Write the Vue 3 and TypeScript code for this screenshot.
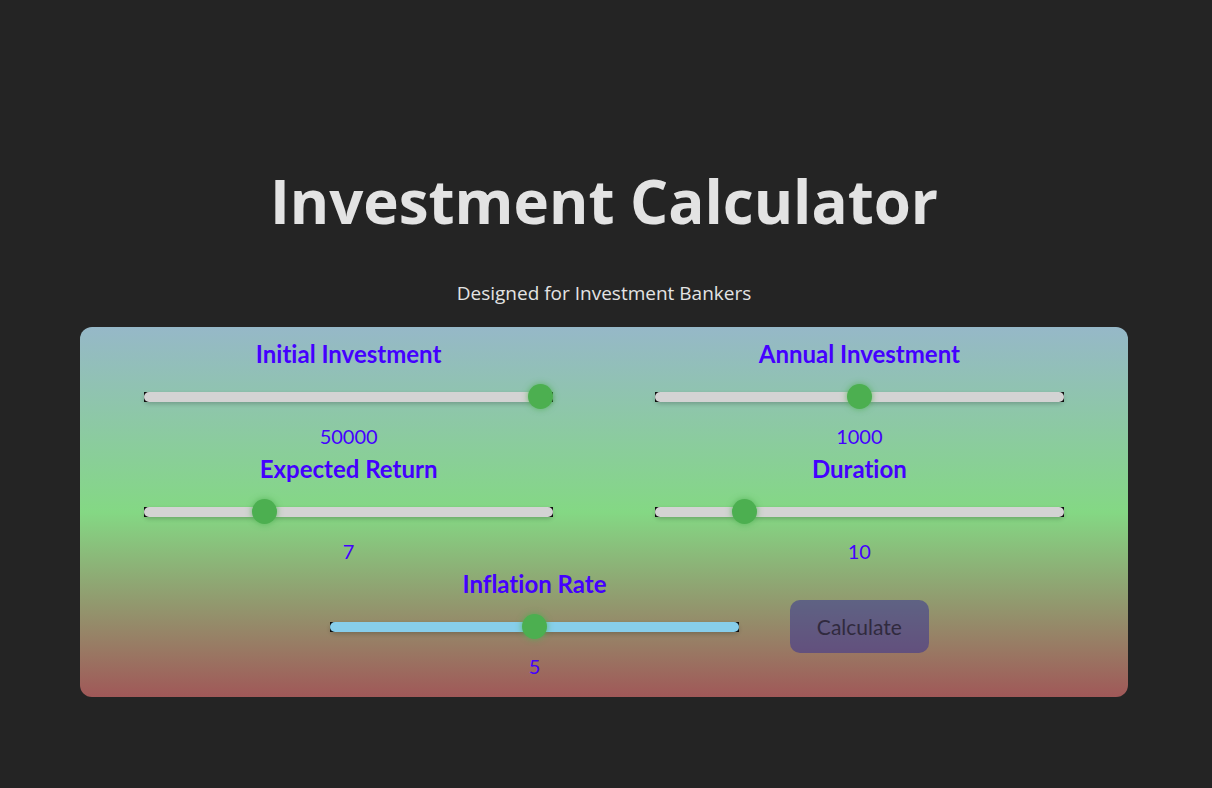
<script setup lang="ts">
import { reactive } from 'vue'

interface Field {
  id: string
  label: string
  min: number
  max: number
  step: number
  value: number
  tone: 'gray' | 'sky'
}

const fields = reactive<Field[]>([
  { id: 'initial', label: 'Initial Investment', min: 0, max: 50000, step: 100, value: 50000, tone: 'gray' },
  { id: 'annual', label: 'Annual Investment', min: 0, max: 2000, step: 50, value: 1000, tone: 'gray' },
  { id: 'return', label: 'Expected Return', min: 0, max: 25, step: 1, value: 7, tone: 'gray' },
  { id: 'duration', label: 'Duration', min: 0, max: 50, step: 1, value: 10, tone: 'gray' },
  { id: 'inflation', label: 'Inflation Rate', min: 0, max: 10, step: 1, value: 5, tone: 'sky' },
])
</script>

<template>
  <main class="page">
    <header class="header">
      <h1 class="title">Investment Calculator</h1>
      <p class="subtitle">Designed for Investment Bankers</p>
    </header>
    <form class="panel" @submit.prevent>
      <div v-for="field in fields" :key="field.id" class="field">
        <label class="label" :for="field.id">{{ field.label }}</label>
        <input
          :id="field.id"
          v-model.number="field.value"
          class="slider"
          :class="field.tone"
          type="range"
          :min="field.min"
          :max="field.max"
          :step="field.step"
        />
        <output class="value" :for="field.id">{{ field.value }}</output>
      </div>
      <button class="calculate" type="submit" disabled>Calculate</button>
    </form>
  </main>
</template>

<style>
body {
  margin: 0;
  background: #242424;
}
</style>

<style scoped>
.page {
  box-sizing: border-box;
  min-height: 100vh;
  padding: 160px 84px 80px 80px;
  color: #e3e3e3;
  font-family: "Segoe UI", "Open Sans", "Noto Sans", sans-serif;
  text-align: center;
}

.title {
  margin: 0;
  font-size: 60px;
  line-height: 82px;
  font-weight: 700;
}

.subtitle {
  margin: 36px 0 18px;
  font-size: 19px;
  line-height: 31px;
}

.panel {
  display: flex;
  flex-wrap: wrap;
  justify-content: center;
  align-items: center;
  padding: 11px 0 14px;
  border-radius: 12px;
  background: linear-gradient(#96b8c8, #84d884 50%, #a05858);
  color: #4400ff;
  font-family: "Gill Sans", "Gill Sans MT", Lato, sans-serif;
}

.field {
  display: flex;
  flex-direction: column;
  width: 39%;
  margin: 0 51px;
}

.label {
  font-size: 24px;
  line-height: 32px;
  font-weight: 700;
  font-variant-ligatures: none;
}

.slider {
  appearance: none;
  width: 100%;
  height: 10px;
  margin: 22px 0 18px;
  background: #101010;
  outline: none;
}

.slider::-webkit-slider-runnable-track {
  height: 10px;
  border-radius: 5px;
  background: #d3d3d3;
  box-shadow: 0 2px 4px rgba(0, 0, 0, 0.2);
}

.slider.sky::-webkit-slider-runnable-track {
  background: #87ceeb;
}

.slider::-webkit-slider-thumb {
  appearance: none;
  width: 25px;
  height: 25px;
  margin-top: -8px;
  border-radius: 50%;
  background: #4caf50;
  box-shadow: 0 0 6px rgba(76, 175, 80, 0.8);
}

.value {
  padding-bottom: 1px;
  font-size: 20px;
  line-height: 32px;
}

.calculate {
  margin-top: 2px;
  padding: 10px 27px;
  border: 0;
  border-radius: 10px;
  background: rgba(43, 42, 152, 0.5);
  color: #302a3e;
  font-family: inherit;
  font-size: 21px;
  line-height: 33px;
}
</style>
